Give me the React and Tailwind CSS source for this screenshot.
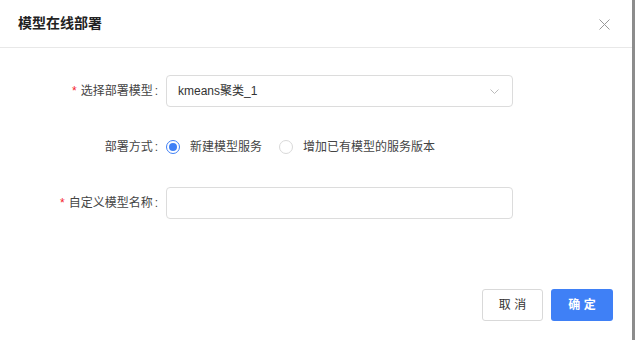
import React from "react";

const font = { fontFamily: '"Liberation Sans", "Noto Sans CJK SC", sans-serif' };

const Label = ({ required, children }) => (
  <div className="w-[160px] shrink-0 text-right text-[12px] text-[#444] pr-[2px]">
    {required && <span className="text-[#f5222d] mr-[4px]">*</span>}
    {children}
    <span className="ml-[2px]">:</span>
  </div>
);

const Radio = ({ checked, children }) => (
  <label className="flex items-center gap-[10px] text-[12px] text-[#444]">
    <span
      className={
        "w-[14px] h-[14px] rounded-full border flex items-center justify-center " +
        (checked ? "border-[#3f80f6]" : "border-[#d9d9d9]")
      }
    >
      {checked && <span className="w-[8px] h-[8px] rounded-full bg-[#3f80f6]" />}
    </span>
    {children}
  </label>
);

export default function App() {
  return (
    <div className="w-[635px] h-[340px] flex bg-white" style={font}>
      <div className="flex-1 flex flex-col">
        <div className="h-[48px] shrink-0 flex items-center justify-between pl-[18px] pr-[22px] border-b border-[#e8e8e8]">
          <h1 className="text-[14px] font-bold text-[#222]">模型在线部署</h1>
          <svg width="11" height="11" viewBox="0 0 11 11" className="mt-[1px]">
            <path d="M0.5 0.5 L10.5 10.5 M10.5 0.5 L0.5 10.5" stroke="#999" strokeWidth="1" />
          </svg>
        </div>

        <div className="flex-1 flex flex-col gap-[30px] pt-[27px]">
          <div className="flex items-center gap-[6px]">
            <Label required>选择部署模型</Label>
            <div className="w-[347px] h-[32px] border border-[#dcdcdc] rounded-[4px] flex items-center justify-between pl-[11px] pr-[13px] text-[12px] text-[#333]">
              <span>kmeans聚类_1</span>
              <svg width="9" height="5" viewBox="0 0 9 5">
                <path d="M0.5 0.5 L4.5 4.5 L8.5 0.5" fill="none" stroke="#bbb" strokeWidth="1" />
              </svg>
            </div>
          </div>

          <div className="flex items-center gap-[6px] h-[20px]">
            <Label>部署方式</Label>
            <div className="flex items-center gap-[17px]">
              <Radio checked>新建模型服务</Radio>
              <Radio>增加已有模型的服务版本</Radio>
            </div>
          </div>

          <div className="flex items-center gap-[6px]">
            <Label required>自定义模型名称</Label>
            <input className="w-[347px] h-[32px] border border-[#dcdcdc] rounded-[4px] outline-none px-[11px] text-[12px]" />
          </div>
        </div>

        <div className="flex justify-end gap-[8px] pr-[19px] pb-[19px]">
          <button className="w-[61px] h-[32px] border border-[#d9d9d9] rounded-[3px] bg-white text-[12px] text-[#333]">
            取 消
          </button>
          <button className="w-[62px] h-[32px] rounded-[3px] bg-[#3f80f6] text-[12px] text-white font-bold">
            确 定
          </button>
        </div>
      </div>
      <div className="w-[3px] bg-[#8c8c8c]" />
    </div>
  );
}
